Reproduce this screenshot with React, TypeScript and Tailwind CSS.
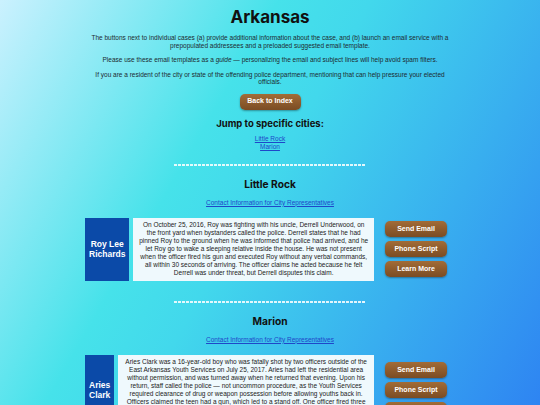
import React from 'react'

interface Case {
  name: string
  summary: string
}

interface City {
  name: string
  cases: Case[]
}

const cities: City[] = [
  {
    name: 'Little Rock',
    cases: [
      {
        name: 'Roy Lee Richards',
        summary:
          'On October 25, 2016, Roy was fighting with his uncle, Derrell Underwood, on the front yard when bystanders called the police. Derrell states that he had pinned Roy to the ground when he was informed that police had arrived, and he let Roy go to wake a sleeping relative inside the house. He was not present when the officer fired his gun and executed Roy without any verbal commands, all within 30 seconds of arriving. The officer claims he acted because he felt Derrell was under threat, but Derrell disputes this claim.',
      },
    ],
  },
  {
    name: 'Marion',
    cases: [
      {
        name: 'Aries Clark',
        summary:
          'Aries Clark was a 16-year-old boy who was fatally shot by two officers outside of the East Arkansas Youth Services on July 25, 2017. Aries had left the residential area without permission, and was turned away when he returned that evening. Upon his return, staff called the police — not uncommon procedure, as the Youth Services required clearance of drug or weapon possession before allowing youths back in. Officers claimed the teen had a gun, which led to a stand off. One officer fired three rounds at Aries from behind — striking him in the back of the head, the back, and the arm.',
      },
    ],
  },
]

const headingFont = "font-['Inter','Noto_Sans',sans-serif]"

const BrownButton = ({ label, className = '' }: { label: string; className?: string }): React.ReactNode => (
  <button
    className={`flex h-[16px] items-center justify-center rounded-[5px] bg-gradient-to-b from-[#a26c37] to-[#7b4c23] text-[7px] font-bold text-white shadow-[0_1px_2px_rgba(0,0,0,0.35)] ${className}`}
  >
    {label}
  </button>
)

const Divider = (): React.ReactNode => (
  <div className="mx-auto h-[2px] w-[192px] bg-[repeating-linear-gradient(90deg,rgba(255,255,255,0.85)_0px,rgba(255,255,255,0.85)_3px,transparent_3px,transparent_4px)]" />
)

const CaseRow = ({ item }: { item: Case }): React.ReactNode => (
  <div className="flex items-center pr-[8px]">
    <div className="flex flex-1 items-stretch gap-[4px] self-stretch">
      <div className="flex w-min items-center bg-[#0b4aa8] px-[4px] text-center text-[8.5px] leading-[10px] font-bold text-white">
        {item.name}
      </div>
      <div className="flex-1 bg-[#eff9fd] px-[5px] py-[3.5px] text-center text-[6.5px] leading-[8px] text-[#222]">
        {item.summary}
      </div>
    </div>
    <div className="ml-[11px] flex w-[62px] flex-col gap-[4px]">
      <BrownButton label="Send Email" />
      <BrownButton label="Phone Script" />
      <BrownButton label="Learn More" />
    </div>
  </div>
)

const CitySection = ({ city }: { city: City }): React.ReactNode => (
  <section id={city.name.toLowerCase().replace(' ', '-')}>
    <Divider />
    <h2 className={`mt-[11px] text-center text-[10.2px] leading-[14px] font-bold text-[#111] ${headingFont}`}>
      {city.name}
    </h2>
    <div className="mt-[8px] text-center text-[6.5px] leading-[8px]">
      <a href="#" className="text-[#1f47c9] underline">
        Contact Information for City Representatives
      </a>
    </div>
    <div className="mt-[11px] flex flex-col gap-[18px]">
      {city.cases.map((item) => (
        <CaseRow key={item.name} item={item} />
      ))}
    </div>
  </section>
)

const App = (): React.ReactNode => {
  return (
    <div className="min-h-screen bg-[linear-gradient(120deg,#cbf1fe_0%,#46e2ea_36%,#42d8ec_48%,#2e84f2_100%)] bg-fixed font-['Liberation_Sans',Arial,sans-serif] text-[#1d2a30]">
      <div className="mx-auto w-[370px] pt-[7px] pb-[40px]">
        <h1 className={`text-center text-[17px] leading-[20px] font-bold text-[#111] ${headingFont}`}>Arkansas</h1>
        <div className="mt-[7px] flex flex-col gap-[7px] text-center text-[6.5px] leading-[7.5px]">
          <p>
            The buttons next to individual cases (a) provide additional information about the case, and (b) launch an
            email service with a prepopulated addressees and a preloaded suggested email template.
          </p>
          <p>
            Please use these email templates as a <i>guide</i> — personalizing the email and subject lines will help
            avoid spam filters.
          </p>
          <p>
            If you are a resident of the city or state of the offending police department, mentioning that can help
            pressure your elected officials.
          </p>
        </div>
        <div className="mt-[8px] flex justify-center">
          <BrownButton label="Back to Index" className="w-[61px]" />
        </div>
        <h3 className={`mt-[8px] text-center text-[9.5px] leading-[12px] font-bold text-[#111] ${headingFont}`}>
          Jump to specific cities:
        </h3>
        <div className="mt-[5px] flex flex-col items-center text-[6.5px] leading-[8px]">
          {cities.map((city) => (
            <a key={city.name} href="#" className="text-[#1f47c9] underline">
              {city.name}
            </a>
          ))}
        </div>
        <div className="mt-[13px] flex flex-col gap-[20px]">
          {cities.map((city) => (
            <CitySection key={city.name} city={city} />
          ))}
        </div>
      </div>
    </div>
  )
}

export default App
